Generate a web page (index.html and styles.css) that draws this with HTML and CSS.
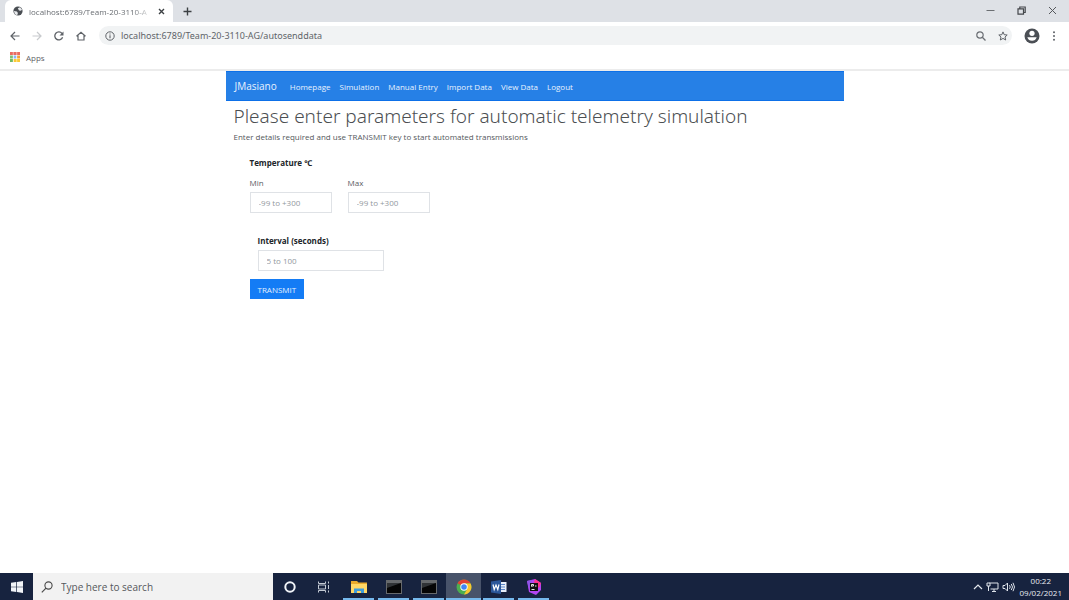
FILE: index.html
```html
<!DOCTYPE html>
<html lang="en">
<head>
<meta charset="utf-8">
<title>Automatic telemetry simulation</title>
<link rel="stylesheet" href="styles.css">
</head>
<body>
<div class="screen">
  <header class="browser">
    <div class="tabstrip">
      <div class="tab">
        <svg class="icon" width="10" height="10" viewBox="0 0 10 10"><circle cx="5" cy="5" r="4.6" fill="#4a4e53"/><path d="M4.800 2.200 7 1.200l2 2.300-1 1.300-2-.4zM.9 5l3 .6 1 1.400-.7 2.200-2.200-1z" fill="#e8eaed"/></svg>
        <span class="tab-title">localhost:6789/Team-20-3110-A</span>
        <button class="icon-button" aria-label="Close tab"><svg width="7" height="7" viewBox="0 0 7 7"><path d="M1 1l5 5M6 1 1 6" stroke="#3c4043" stroke-width="1.4"/></svg></button>
      </div>
      <button class="icon-button new-tab" aria-label="New tab"><svg width="9" height="9" viewBox="0 0 9 9"><path d="M4.500 .5v8M.5 4.500h8" stroke="#3c4043" stroke-width="1.4"/></svg></button>
      <div class="window-controls">
        <button class="icon-button" aria-label="Minimise"><svg width="9" height="9" viewBox="0 0 9 9"><path d="M.5 4.500h8" stroke="#6b6e72"/></svg></button>
        <button class="icon-button" aria-label="Restore"><svg width="9" height="9" viewBox="0 0 9 9"><path d="M1 2.800h5.500v5.400H1zM2.800 2.500V1h5.400v5.500H6.800" fill="none" stroke="#44474b" stroke-width="1.200"/></svg></button>
        <button class="icon-button" aria-label="Close window"><svg width="9" height="9" viewBox="0 0 9 9"><path d="M1 1l7 7M8 1 1 8" stroke="#55585c"/></svg></button>
      </div>
    </div>
    <div class="toolbar">
      <button class="icon-button" aria-label="Back"><svg width="10" height="10" viewBox="0 0 10 10"><path d="M9.500 5H1.200M5 1 1 5l4 4" fill="none" stroke="#5f6368" stroke-width="1.2"/></svg></button>
      <button class="icon-button" aria-label="Forward"><svg width="10" height="10" viewBox="0 0 10 10"><path d="M.5 5h8.300M5 1l4 4-4 4" fill="none" stroke="#c8cacd" stroke-width="1.2"/></svg></button>
      <button class="icon-button" aria-label="Reload"><svg width="10" height="10" viewBox="0 0 10 10"><path d="M8.600 6.300A4 4 0 1 1 8 2.500" fill="none" stroke="#5f6368" stroke-width="1.3"/><path d="M9.500.5v4h-4z" fill="#5f6368"/></svg></button>
      <button class="icon-button" aria-label="Home"><svg width="10" height="10" viewBox="0 0 10 10"><path d="M.5 5.300 5 1.200l4.500 4.100M2 4.500V9h6V4.500" fill="none" stroke="#5f6368" stroke-width="1.2"/></svg></button>
      <div class="address">
        <svg class="icon" width="10" height="10" viewBox="0 0 10 10"><circle cx="5" cy="5" r="4.200" fill="none" stroke="#5f6368"/><path d="M5 4.300v3M5 2.500v1" stroke="#5f6368" stroke-width="1.100"/></svg>
        <input class="address-input" type="text" aria-label="Address" value="localhost:6789/Team-20-3110-AG/autosenddata">
        <button class="icon-button" aria-label="Zoom"><svg width="10" height="10" viewBox="0 0 10 10"><circle cx="4" cy="4" r="3.200" fill="none" stroke="#6b6f74" stroke-width="1.200"/><path d="M6.300 6.300 9.500 9.500" stroke="#6b6f74" stroke-width="1.300"/></svg></button>
        <button class="icon-button" aria-label="Bookmark"><svg width="10" height="10" viewBox="0 0 10 10"><path d="M5 .9l1.200 2.800 3 .3L7 6l.7 3L5 7.400 2.300 9 3 6 .8 4l3-.3z" fill="none" stroke="#5f6368"/></svg></button>
      </div>
      <button class="icon-button" aria-label="Profile"><svg width="16" height="16" viewBox="0 0 16 16"><circle cx="8" cy="8" r="7.500" fill="#4b4f55"/><circle cx="8" cy="5.300" r="2.600" fill="#fff"/><path d="M3.300 9.200h9.400Q11.500 12.800 8 12.800T3.300 9.200z" fill="#fff"/></svg></button>
      <button class="icon-button menu-button" aria-label="Menu"><svg width="4" height="10" viewBox="0 0 4 10"><g fill="#5f6368"><circle cx="2" cy="1.200" r="1"/><circle cx="2" cy="5" r="1"/><circle cx="2" cy="8.800" r="1"/></g></svg></button>
    </div>
    <div class="bookmarks">
      <a class="bookmark" href="#apps">
        <svg width="10" height="10" viewBox="0 0 10 10"><path d="M0 0h10v3H0z" fill="#ea6b61"/><path d="M0 3.500h3v3H0z" fill="#7fbf73"/><path d="M3.500 3.500h3v3h-3z" fill="#8ab4f8"/><path d="M7 3.500h3v3H7z" fill="#f2a13a"/><path d="M0 7h3v3H0z" fill="#6fb966"/><path d="M3.500 7H10v3H3.500z" fill="#fbc934"/><path d="M3.250 0v10M6.750 0v10" stroke="#fff" stroke-width=".5"/></svg>
        Apps
      </a>
    </div>
  </header>

  <main class="page">
    <div class="container">
      <nav class="navbar">
        <a class="brand" href="#home">JMasiano</a>
        <a class="nav-link" href="#homepage">Homepage</a>
        <a class="nav-link" href="#simulation">Simulation</a>
        <a class="nav-link" href="#manual">Manual Entry</a>
        <a class="nav-link" href="#import">Import Data</a>
        <a class="nav-link" href="#view">View Data</a>
        <a class="nav-link" href="#logout">Logout</a>
      </nav>
      <div class="content">
        <h1 class="title">Please enter parameters for automatic telemetry simulation</h1>
        <p class="lead">Enter details required and use TRANSMIT key to start automated transmissions</p>
        <form class="form">
          <fieldset class="group">
            <legend class="group-title">Temperature ℃</legend>
            <div class="row">
              <div class="field">
                <label class="label" for="min">Min</label>
                <input class="input" id="min" type="text" placeholder="-99 to +300">
              </div>
              <div class="field">
                <label class="label" for="max">Max</label>
                <input class="input" id="max" type="text" placeholder="-99 to +300">
              </div>
            </div>
          </fieldset>
          <div class="interval">
            <label class="group-title" for="interval">Interval (seconds)</label>
            <input class="input input-wide" id="interval" type="text" placeholder="5 to 100">
          </div>
          <button class="submit" type="button">TRANSMIT</button>
        </form>
      </div>
    </div>
  </main>

  <footer class="taskbar">
    <button class="start" aria-label="Start"><svg width="12" height="12" viewBox="0 0 12 12"><path d="M0 1.700 5.300 1v4.700H0zM6 .9 12 0v5.700H6zM0 6.300h5.300V11L0 10.300zM6 6.300h6V12l-6-.9z" fill="#f1f4f8"/></svg></button>
    <label class="search">
      <svg width="12" height="12" viewBox="0 0 12 12"><circle cx="7.500" cy="4.500" r="3.600" fill="none" stroke="#4a4a4a" stroke-width="1.100"/><path d="M5 7.200.8 11.400" stroke="#4a4a4a" stroke-width="1.200"/></svg>
      <input class="search-input" type="text" aria-label="Search" placeholder="Type here to search">
    </label>
    <div class="tasks">
      <button class="task" aria-label="Cortana"><svg width="14" height="14" viewBox="0 0 14 14"><circle cx="7" cy="7" r="4.700" fill="none" stroke="#f1f4f8" stroke-width="2"/></svg></button>
      <button class="task" aria-label="Task view"><svg width="14" height="14" viewBox="0 0 14 14"><path d="M1.500 1.500v2h7v-2M1.500 12.500v-2h7v2M1.500 5h7v4h-7zM11.500 1.500v2M11.500 5v4M11.500 10.500v2" fill="none" stroke="#c4cad4"/></svg></button>
      <button class="task open" aria-label="File Explorer"><svg width="18" height="14" viewBox="0 0 18 14"><path d="M1 1h6l1.500 1.500H17V13H1z" fill="#e9aa2c"/><path d="M1 4h16v9H1z" fill="#ffd766"/><path d="M4 13V8.500h10V13h-3v-2H7v2z" fill="#3f9ddb"/></svg></button>
      <button class="task open" aria-label="Command Prompt"><svg width="18" height="14" viewBox="0 0 18 14"><path d="M1 0h16v14H1z" fill="#66696c"/><path d="M2 3h14v10H2z" fill="#050505"/><path d="M2 3h14L2 8z" fill="#303336"/></svg></button>
      <button class="task open" aria-label="Command Prompt 2"><svg width="18" height="14" viewBox="0 0 18 14"><path d="M1 0h16v14H1z" fill="#66696c"/><path d="M2 3h14v10H2z" fill="#050505"/><path d="M2 3h14L2 8z" fill="#303336"/></svg></button>
      <button class="task open active" aria-label="Chrome"><svg width="16" height="16" viewBox="0 0 16 16"><circle cx="8" cy="8" r="7.500" fill="#4caf50"/><path d="M8 8 1.500 4.250A7.500 7.500 0 0 1 14.500 4.250L8 4.500z" fill="#e34133"/><path d="M8 4.500h6.600A7.500 7.500 0 0 1 8 15.500l3.200-5.600z" fill="#fbc62f"/><circle cx="8" cy="8" r="3.700" fill="#fff"/><circle cx="8" cy="8" r="2.800" fill="#4285f4"/></svg></button>
      <button class="task open" aria-label="Word"><svg width="16" height="14" viewBox="0 0 16 14"><path d="M8 2h7.500v10H8z" fill="#e8effa"/><path d="M9 4.500h5M9 7h5M9 9.500h5" stroke="#5b86c9"/><path d="M0 1.500 10 0v14L0 12.500z" fill="#2b579a"/><path d="M2 4.500l1.200 5L5 5l1.800 4.500L8 4.500" fill="none" stroke="#fff" stroke-width="1.200"/></svg></button>
      <button class="task open" aria-label="PhpStorm"><svg width="16" height="16" viewBox="0 0 16 16"><path d="M1 2 9 0l6 4v7l-5 5-7-3z" fill="#b345f1"/><path d="M9 0l6 4-2 5-5-6z" fill="#ff318c"/><path d="M1 2l5-1-3 9z" fill="#8e55e8"/><path d="M4 4h8v8H4z" fill="#111"/><path d="M5.500 7.500v-2h2v1.500h-2M9 7h1.500M5.500 10.500h3" fill="none" stroke="#e8e8e8"/></svg></button>
    </div>
    <div class="tray">
      <svg width="10" height="12" viewBox="0 0 10 12"><path d="M1 8l4-4 4 4" fill="none" stroke="#e4e8ee" stroke-width="1.200"/></svg>
      <svg width="13" height="12" viewBox="0 0 13 12"><path d="M3.500 2H12v6H4.500M6 10.500h4M8 8v2.500M1 2h3v3H1zM2.500 5v5" fill="none" stroke="#dfe4eb"/></svg>
      <svg width="13" height="12" viewBox="0 0 13 12"><path d="M1 4.500h2L5.500 2v8L3 7.500H1zM7.500 4.200q1.500 1.800 0 3.600M9.300 3q2.400 3 0 6M11 1.800q3 4.200 0 8.400" fill="none" stroke="#dfe4eb"/></svg>
      <div class="clock"><time>00:22</time><time>09/02/2021</time></div>
    </div>
  </footer>
</div>
</body>
</html>
```
FILE: styles.css
```css
* {
  box-sizing: border-box;
}

body {
  margin: 0;
  background: #fff;
  color: #212529;
  font-family: "Open Sans", "Noto Sans", sans-serif;
  font-size: 8px;
}

button,
input {
  font: inherit;
  border: 0;
  padding: 0;
  margin: 0;
  background: none;
}

a {
  color: inherit;
  text-decoration: none;
}

svg {
  display: block;
  flex: none;
}

.screen {
  display: flex;
  flex-direction: column;
  min-height: 100vh;
}

.icon-button {
  display: flex;
  align-items: center;
  justify-content: center;
}

.tabstrip {
  display: flex;
  align-items: center;
  height: 22px;
  padding-left: 5px;
  background: #dee1e6;
}

.tab {
  display: flex;
  align-items: center;
  gap: 6px;
  width: 168px;
  height: 22px;
  padding: 0 8px;
  border-radius: 6px 6px 0 0;
  background: #fff;
}

.tab-title {
  flex: 1;
  white-space: nowrap;
  color: #6a6e73;
  mask-image: linear-gradient(to right, #000 85%, transparent);
}

.new-tab {
  margin-left: 10px;
}

.window-controls {
  display: flex;
  gap: 22px;
  margin-left: auto;
  padding: 0 12px 2px 0;
}

.toolbar {
  display: flex;
  align-items: center;
  gap: 12px;
  height: 27px;
  padding: 0 10px;
}

.address {
  display: flex;
  flex: 1;
  align-items: center;
  gap: 12px;
  height: 19px;
  margin-left: 1px;
  padding: 0 4px 0 6px;
  border-radius: 10px;
  background: #f1f3f4;
}

.address-input {
  flex: 1;
  min-width: 0;
  margin-left: -6px;
  font-family: "Noto Sans", "Open Sans", sans-serif;
  font-size: 9px;
  color: #606469;
}

.menu-button {
  padding: 0 3px 0 0;
}

.bookmarks {
  display: flex;
  align-items: center;
  height: 22px;
  padding: 0 10px 4px;
  border-bottom: 2px solid #ececec;
}

.bookmark {
  display: flex;
  align-items: center;
  gap: 6px;
  color: #5f6368;
}

.page {
  flex: 1;
}

.container {
  max-width: 618px;
  margin: 0 auto;
}

.navbar {
  display: flex;
  align-items: center;
  gap: 9px;
  min-height: 30px;
  padding: 0 9px;
  background: #2680e6;
  border: solid #0d70e8;
  border-width: 1px 0;
  color: #e8f2fe;
}

.brand {
  margin-right: 4px;
  font-size: 10px;
}

.content {
  padding: 0 8px;
}

.title {
  margin: 0;
  font-family: "Noto Sans", "Open Sans", sans-serif;
  font-size: 19px;
  font-weight: 300;
  line-height: 30px;
  color: #4c4f52;
}

.lead {
  margin: 0;
  line-height: 12px;
  color: #54585c;
}

.form {
  padding: 14px 16px;
}

.group {
  min-width: 0;
  margin: 0;
  padding: 0;
  border: 0;
}

.group-title {
  display: block;
  padding: 0;
  font-weight: 700;
  line-height: 12px;
}

.row {
  display: flex;
  gap: 16px;
  padding-top: 8px;
}

.field {
  width: 82px;
}

.label {
  display: block;
  line-height: 12px;
  margin-bottom: 3px;
  color: #5c6064;
}

.input {
  display: block;
  width: 100%;
  height: 21px;
  padding: 0 8px;
  border: 1px solid #dfe2e6;
  background: #fff;
}

.input::placeholder {
  color: #92989e;
  opacity: 1;
}

.interval {
  width: 134px;
  padding: 22px 0 8px 8px;
}

.input-wide {
  margin-top: 3px;
}

.submit {
  height: 20px;
  padding: 0 8px;
  background: #147cf5;
  color: #e3f0ff;
}

.taskbar {
  display: flex;
  height: 27px;
  background: #17233f;
}

.start {
  display: flex;
  align-items: center;
  justify-content: center;
  width: 33px;
}

.search {
  display: flex;
  align-items: center;
  gap: 8px;
  width: 240px;
  padding: 0 8px;
  background: #f2f2f2;
}

.search-input {
  flex: 1;
  min-width: 0;
  font-size: 10px;
}

.search-input::placeholder {
  color: #55585c;
  opacity: 1;
}

.tasks {
  display: flex;
}

.task {
  display: flex;
  align-items: center;
  justify-content: center;
  width: 30px;
  margin: 0 2px;
  border-top: 2px solid transparent;
  border-bottom: 2px solid transparent;
}

.open {
  width: 31px;
  border-bottom-color: #76b9ed;
}

.active {
  width: 35px;
  margin: 0;
  background: #48536a;
  border-top-color: #48536a;
}

.tray {
  display: flex;
  align-items: center;
  gap: 3px;
  margin-left: auto;
  padding-right: 7px;
  color: #e8ecf2;
}

.clock {
  display: flex;
  flex-direction: column;
  align-items: center;
  margin-left: 2px;
  line-height: 12px;
}
```
